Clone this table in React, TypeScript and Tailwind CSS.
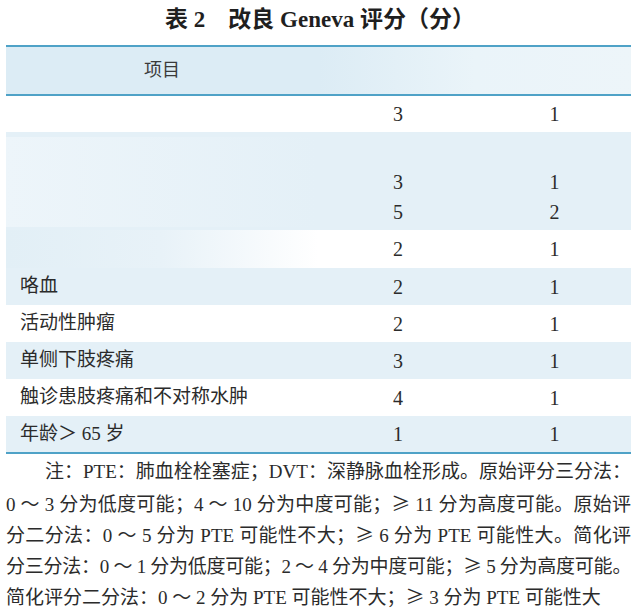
const rows: { label: string; a: string; b: string; h: string; blue: boolean }[] = [
  { label: "咯血", a: "2", b: "1", h: "h-[37px]", blue: true },
  { label: "活动性肿瘤", a: "2", b: "1", h: "h-[37px]", blue: false },
  { label: "单侧下肢疼痛", a: "3", b: "1", h: "h-[37px]", blue: true },
  { label: "触诊患肢疼痛和不对称水肿", a: "4", b: "1", h: "h-[37px]", blue: false },
  { label: "年龄＞ 65 岁", a: "1", b: "1", h: "h-[36px]", blue: true },
];

const Ge = () => <span className="font-['Noto_Sans_CJK_SC',sans-serif]">≥</span>;

function Cell({ children }: { children?: React.ReactNode }) {
  return <div className="flex items-center justify-center text-[20px]">{children}</div>;
}

const justified = "h-[31px] leading-[31px] text-justify [text-align-last:justify] whitespace-nowrap";

export default function App() {
  return (
    <div className="w-[640px] h-[615px] overflow-hidden bg-white text-[#2b2b2b] font-['Liberation_Serif','Noto_Sans_CJK_SC',serif]">
      {/* title */}
      <div className="h-[45px] flex items-center justify-center text-[23px] font-bold text-[#1f1f1f] pb-[5px]">
        表 2　改良 Geneva 评分（分）
      </div>

      <div className="ml-[6px] w-[625px] text-[19px]">
        {/* header */}
        <div className="grid grid-cols-[312px_160px_153px] h-[51px] border-y-2 border-[#4fa2c7] bg-[#dcecf5]">
          <div className="flex items-center justify-center">
            <span className="text-[18px] text-[#3a3a3a]">项目</span>
          </div>
          <div className="col-span-2 bg-linear-to-r from-[#dcecf5] via-[#eaf4f9] to-[#edf5f9]" />
        </div>

        {/* row 1 */}
        <div className="grid grid-cols-[312px_160px_153px] h-[36px] bg-white">
          <div />
          <Cell>3</Cell>
          <Cell>1</Cell>
        </div>

        {/* row 2 */}
        <div className="grid grid-cols-[312px_160px_153px] h-[98px] pt-[5px] pb-[3px] bg-[#e4f0f7]">
          <div className="bg-linear-to-r from-[#edf5fa] to-[#e4f0f7]" />
          <div className="col-span-2 flex flex-col">
            <div className="h-[30px]" />
            <div className="grid grid-cols-[160px_153px] h-[30px]">
              <Cell>3</Cell>
              <Cell>1</Cell>
            </div>
            <div className="grid grid-cols-[160px_153px] h-[30px]">
              <Cell>5</Cell>
              <Cell>2</Cell>
            </div>
          </div>
        </div>

        {/* row 3 */}
        <div className="grid grid-cols-[312px_160px_153px] h-[38px] bg-white">
          <div className="bg-linear-to-r from-[#e2eff6] via-[#e8f2f8] to-white" />
          <Cell>2</Cell>
          <Cell>1</Cell>
        </div>

        {rows.map((r, i) => (
          <div
            key={i}
            className={`grid grid-cols-[312px_160px_153px] ${r.h} ${r.blue ? "bg-[#e4f0f7]" : "bg-white"} ${
              i === rows.length - 1 ? "box-content border-b-2 border-[#4fa2c7]" : ""
            }`}
          >
            <div className="flex items-center pl-[14px]">{r.label}</div>
            <Cell>{r.a}</Cell>
            <Cell>{r.b}</Cell>
          </div>
        ))}

        {/* notes */}
        <div className="pt-[2px] text-[19px]">
          <div className={`${justified} pl-[39px]`}>
            注：PTE：肺血栓栓塞症；DVT：深静脉血栓形成。原始评分三分法：
          </div>
          <div className={justified}>
            0 ～ 3 分为低度可能；4 ～ 10 分为中度可能；<Ge /> 11 分为高度可能。原始评
          </div>
          <div className={justified}>
            分二分法：0 ～ 5 分为 PTE 可能性不大；<Ge /> 6 分为 PTE 可能性大。简化评
          </div>
          <div className={`${justified} tracking-[-0.4px]`}>
            分三分法：0 ～ 1 分为低度可能；2 ～ 4 分为中度可能；<Ge /> 5 分为高度可能。
          </div>
          <div className="h-[31px] leading-[31px] whitespace-nowrap">
            简化评分二分法：0 ～ 2 分为 PTE 可能性不大；<Ge /> 3 分为 PTE 可能性大
          </div>
        </div>
      </div>
    </div>
  );
}
